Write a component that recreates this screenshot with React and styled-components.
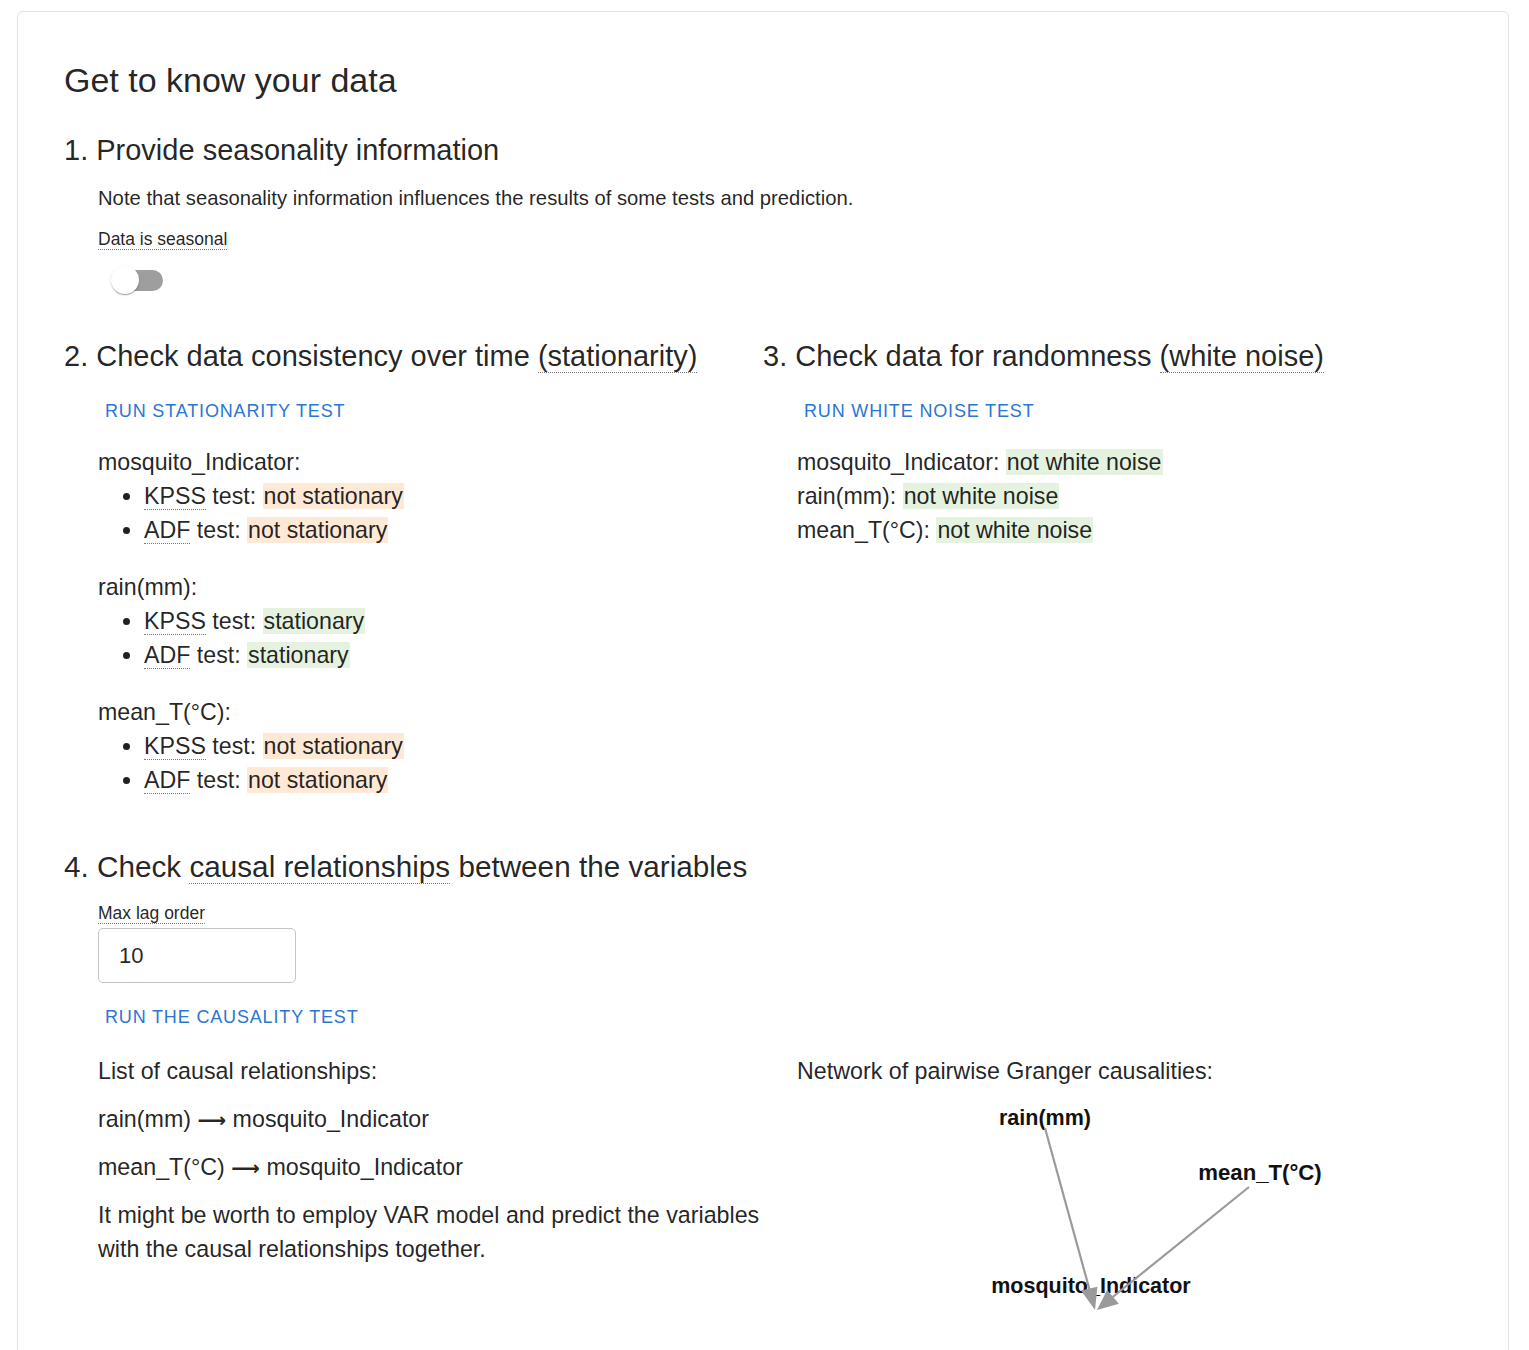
import React from "react";
import styled, { createGlobalStyle } from "styled-components";

const Global = createGlobalStyle`
  html, body { margin: 0; padding: 0; background: #fff; }
  body { font-family: "Liberation Sans", Arial, Helvetica, sans-serif; color: rgba(0,0,0,0.87); }
  * { box-sizing: border-box; }
`;

const Page = styled.div`
  padding: 11px 20px 0 17px;
`;

const Card = styled.div`
  border: 1px solid #e2e2e2;
  border-radius: 6px;
  padding: 47px 46px 80px 46px;
`;

const Title = styled.h1`
  margin: 0;
  font-size: 34px;
  line-height: 42px;
  font-weight: 400;
`;

const Heading = styled.h2`
  margin: ${(p) => p.$mt || 0}px 0 0 0;
  font-size: ${(p) => p.$size || 29}px;
  line-height: 40px;
  font-weight: 400;
`;

const Indented = styled.div`
  padding-left: 34px;
`;

const Note = styled.p`
  margin: 13px 0 0 0;
  font-size: 20.25px;
  line-height: 30px;
`;

const FieldLabel = styled.div`
  margin-top: ${(p) => p.$mt || 0}px;
  font-size: 17.5px;
  line-height: 24px;
`;

const Dotted = styled.span`
  border-bottom: 1px dotted #7a7a7a;
`;

const SwitchRoot = styled.div`
  position: relative;
  margin-top: 10px;
  width: 70px;
  height: 38px;
`;

const Track = styled.div`
  position: absolute;
  left: 17px;
  top: 9px;
  width: 48px;
  height: 21px;
  border-radius: 11px;
  background: #9e9e9e;
`;

const Thumb = styled.div`
  position: absolute;
  left: 13px;
  top: 5px;
  width: 28px;
  height: 28px;
  border-radius: 50%;
  background: #fff;
  box-shadow: 0 2px 1px -1px rgba(0,0,0,0.2), 0 1px 1px 0 rgba(0,0,0,0.14), 0 1px 3px 0 rgba(0,0,0,0.12);
`;

const TwoCol = styled.div`
  display: grid;
  grid-template-columns: 1fr 1fr;
  margin-top: ${(p) => p.$mt || 0}px;
`;

const Column = styled.div`
  min-width: 0;
`;

const TextButton = styled.button`
  display: inline-block;
  margin: ${(p) => p.$mt || 14}px 0 0 -1px;
  padding: 8px 8px;
  border: 0;
  background: transparent;
  font-family: "Liberation Sans", Arial, sans-serif;
  font-size: 18px;
  line-height: 26px;
  letter-spacing: 0.84px;
  text-transform: uppercase;
  color: #2a76d3;
  cursor: pointer;
`;

const Groups = styled.div`
  margin-top: 13px;
  display: flex;
  flex-direction: column;
  gap: 23px;
`;

const Group = styled.div`
  font-size: 23.2px;
  line-height: 34px;
`;

const Line = styled.div`
  font-size: 23.25px;
  line-height: 34px;
`;

const Bullets = styled.ul`
  margin: 0;
  padding-left: 46px;
  list-style: disc;
`;

const Mark = styled.span`
  background: ${(p) => (p.$ok ? "#e4f2df" : "#fde9d6")};
  padding: 0 1px;
`;

const Input = styled.input`
  display: block;
  margin-top: 3px;
  width: 198px;
  height: 55px;
  border: 1px solid #c4c4c4;
  border-radius: 5px;
  padding: 0 0 0 20px;
  font-family: "Liberation Sans", Arial, sans-serif;
  font-size: 22px;
  color: rgba(0,0,0,0.87);
  outline: none;
`;

const Para = styled.p`
  margin: ${(p) => (p.$first ? 0 : 14)}px 0 0 0;
  font-size: 23.25px;
  line-height: 34px;
`;

const ArrowGlyph = styled.span`
  font-family: "DejaVu Sans", sans-serif;
  font-weight: 700;
  font-size: 20px;
  line-height: 0;
`;

const Graph = styled.svg`
  display: block;
  margin-top: 7px;
  overflow: visible;
`;

const Arrow = () => <ArrowGlyph>⟶</ArrowGlyph>;

const Abbr = ({ children }) => <Dotted>{children}</Dotted>;

const StatGroup = ({ name, kpss, adf }) => (
  <Group>
    <div>{name}:</div>
    <Bullets>
      <li>
        <Abbr>KPSS</Abbr> test: <Mark $ok={kpss}>{kpss ? "stationary" : "not stationary"}</Mark>
      </li>
      <li>
        <Abbr>ADF</Abbr> test: <Mark $ok={adf}>{adf ? "stationary" : "not stationary"}</Mark>
      </li>
    </Bullets>
  </Group>
);

const NetworkGraph = () => (
  <Graph width="600" height="240" viewBox="0 0 600 240">
    <g fontFamily='"Liberation Sans", Arial, sans-serif' fontWeight="700" fontSize="21.5" fill="#111" textAnchor="middle">
      <text x="248" y="30">rain(mm)</text>
      <text x="463" y="85" fontSize="22.2">mean_T(°C)</text>
      <text x="294" y="198">mosquito_Indicator</text>
    </g>
    <g stroke="#9a9a9a" strokeWidth="2.2" fill="none">
      <line x1="248" y1="33" x2="294" y2="200" />
      <line x1="452" y1="92" x2="312" y2="205" />
    </g>
    <g fill="#9a9a9a">
      <polygon points="298,215 284,195.6 300.4,191.8" />
      <polygon points="300,215 310.1,195 321.9,208.8" />
    </g>
  </Graph>
);

export default function App() {
  return (
    <>
      <Global />
      <Page>
        <Card>
          <Title>Get to know your data</Title>
          <Heading $mt={29}>1. Provide seasonality information</Heading>
          <Indented>
            <Note>Note that seasonality information influences the results of some tests and prediction.</Note>
            <FieldLabel $mt={14}>
              <Dotted>Data is seasonal</Dotted>
            </FieldLabel>
            <SwitchRoot>
              <Track />
              <Thumb />
            </SwitchRoot>
          </Indented>

          <TwoCol $mt={37}>
            <Column>
              <Heading>
                2. Check data consistency over time <Abbr>(stationarity)</Abbr>
              </Heading>
              <Indented>
                <TextButton>Run stationarity test</TextButton>
                <Groups>
                  <StatGroup name="mosquito_Indicator" kpss={false} adf={false} />
                  <StatGroup name="rain(mm)" kpss={true} adf={true} />
                  <StatGroup name="mean_T(°C)" kpss={false} adf={false} />
                </Groups>
              </Indented>
            </Column>
            <Column>
              <Heading>
                3. Check data for randomness <Abbr>(white noise)</Abbr>
              </Heading>
              <Indented>
                <TextButton>Run white noise test</TextButton>
                <Groups>
                  <Group>
                    <div>
                      mosquito_Indicator: <Mark $ok>not white noise</Mark>
                    </div>
                    <div>
                      rain(mm): <Mark $ok>not white noise</Mark>
                    </div>
                    <div>
                      mean_T(°C): <Mark $ok>not white noise</Mark>
                    </div>
                  </Group>
                </Groups>
              </Indented>
            </Column>
          </TwoCol>

          <Heading $mt={50} $size={29.7}>
            4. Check <Abbr>causal relationships</Abbr> between the variables
          </Heading>
          <Indented>
            <FieldLabel $mt={14}>
              <Dotted>Max lag order</Dotted>
            </FieldLabel>
            <Input defaultValue="10" />
            <TextButton $mt={13}>Run the causality test</TextButton>
          </Indented>

          <TwoCol $mt={16}>
            <Column>
              <Indented>
                <Para $first>List of causal relationships:</Para>
                <Para>
                  rain(mm) <Arrow /> mosquito_Indicator
                </Para>
                <Para>
                  mean_T(°C) <Arrow /> mosquito_Indicator
                </Para>
                <Para>
                  It might be worth to employ VAR model and predict the variables with the causal relationships together.
                </Para>
              </Indented>
            </Column>
            <Column>
              <Indented>
                <Line>Network of pairwise Granger causalities:</Line>
                <NetworkGraph />
              </Indented>
            </Column>
          </TwoCol>
        </Card>
      </Page>
    </>
  );
}
